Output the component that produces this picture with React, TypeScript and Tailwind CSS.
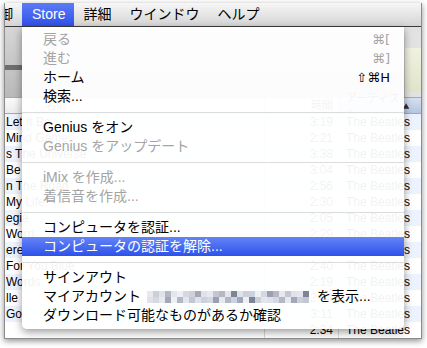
import React from "react";

const rows = [
  { name: "Let It Be", time: "3:19" },
  { name: "Mind Games", time: "2:21" },
  { name: "s The Universe", time: "3:38" },
  { name: "Be", time: "3:04" },
  { name: "n The Road", time: "2:56" },
  { name: "My Life", time: "2:30" },
  { name: "egia", time: "2:05" },
  { name: "Word", time: "2:29" },
  { name: "ere", time: "3:23" },
  { name: "For You Blue", time: "2:40" },
  { name: "Words", time: "2:19" },
  { name: "lle", time: "2:44" },
  { name: "Go", time: "3:11" },
  { name: "", time: "2:34" },
];

const palette = [
  "bg-[#e7e9ef]",
  "bg-[#cdd0d9]",
  "bg-[#b4b8c4]",
  "bg-[#dfe2ea]",
  "bg-[#eef0f4]",
  "bg-[#a3a8b6]",
  "bg-[#d5d8e0]",
  "bg-[#c3c7d2]",
  "bg-[#7f8494]",
  "bg-[#e3e6ed]",
  "bg-[#c9d3e3]",
  "bg-[#9aa0b0]",
];

const pattern = [
  0, 1, 3, 2, 9, 4, 6, 1, 5, 3, 0, 7, 2, 9, 8, 3, 1, 10, 4, 6, 11, 2, 0, 7, 3, 9, 8,
  3, 6, 0, 5, 4, 2, 9, 7, 3, 1, 6, 11, 0, 2, 10, 5, 4, 8, 1, 9, 3, 6, 2, 0, 5, 1, 7,
];

function Item({
  label,
  shortcut,
  disabled,
  active,
}: {
  label: React.ReactNode;
  shortcut?: React.ReactNode;
  disabled?: boolean;
  active?: boolean;
}) {
  const tone = active
    ? "bg-gradient-to-b from-[#6483f6] to-[#2e51ea] text-white"
    : disabled
    ? "text-[#a4a4a4]"
    : "text-black";
  return (
    <div
      className={`h-[19px] flex items-center justify-between pl-[21px] pr-[14px] leading-[19px] whitespace-nowrap ${tone}`}
    >
      <div className="flex items-center">{label}</div>
      {shortcut ? (
        <div className="font-['DejaVu_Sans',sans-serif] text-[13px]">{shortcut}</div>
      ) : null}
    </div>
  );
}

function Sep() {
  return (
    <div className="h-[12px] flex items-center">
      <div className="h-px w-full bg-[#dcdcdc]" />
    </div>
  );
}

function Mosaic() {
  return (
    <div className="grid grid-cols-[repeat(27,6px)] grid-rows-[repeat(2,6px)] ml-[6px]">
      {pattern.map((p, i) => (
        <div key={i} className={palette[p]} />
      ))}
    </div>
  );
}

export default function App() {
  return (
    <div className="w-[427px] h-[348px] bg-white overflow-hidden pl-[4px] pt-[3px] font-['Liberation_Sans','Noto_Sans_CJK_JP',sans-serif]">
      <div className="relative w-[418px] h-[336px] border-x border-b border-[#8c8c8c] bg-white shadow-[0_2px_6px_rgba(0,0,0,0.45)] overflow-hidden flex flex-col">
        {/* menu bar */}
        <div className="h-[24px] shrink-0 flex items-stretch border-b border-[#3a3a3a] bg-gradient-to-b from-[#f7f7f7] to-[#d4d4d4] text-[14px] text-black whitespace-nowrap">
          <div className="ml-[-29px] px-[9px] flex items-center">制御</div>
          <div className="pl-[10px] pr-[9px] flex items-center text-white bg-gradient-to-b from-[#5d7bf5] to-[#2f50ea]">
            Store
          </div>
          <div className="px-[9px] flex items-center">詳細</div>
          <div className="px-[9px] flex items-center">ウインドウ</div>
          <div className="px-[9px] flex items-center">ヘルプ</div>
        </div>

        {/* toolbar */}
        <div className="h-[70px] shrink-0 flex">
          <div className="w-[17px] flex flex-col bg-gradient-to-b from-[#d6d6d6] to-[#b9b9b9]">
            <div className="h-[38px]" />
            <div className="h-[5px] bg-[#6e6e6e]" />
          </div>
          <div className="flex-1 bg-gradient-to-b from-[#dedede] to-[#bdbdbd]" />
          <div className="w-[16px] flex flex-col bg-[#e2e2e2]">
            <div className="h-[21px]" />
            <div className="h-[44px] bg-gradient-to-b from-[#f1f2e2] to-[#e1e4c8]" />
          </div>
        </div>

        {/* header */}
        <div className="h-[17px] shrink-0 flex border-y border-[#a8a8a8] text-[11px] leading-[15px] text-[#222]">
          <div className="w-[260px] border-r border-[#c4c4c4] bg-gradient-to-b from-[#fbfbfb] to-[#ebebeb] pl-[40px]">
            名前
          </div>
          <div className="w-[74px] border-r border-[#c4c4c4] bg-gradient-to-b from-[#fbfbfb] to-[#ebebeb] text-right pr-[5px]">
            時間
          </div>
          <div className="flex-1 flex justify-between items-center bg-gradient-to-b from-[#d6e0f1] to-[#b4c6e2] pl-[7px] pr-[12px]">
            <span>アーティスト</span>
            <svg width="7" height="6" viewBox="0 0 7 6">
              <path d="M3.5 0 L7 6 L0 6 Z" fill="#2d2d2d" />
            </svg>
          </div>
        </div>

        {/* rows */}
        <div className="flex-1 flex flex-col">
          {rows.map((r, i) => (
            <div
              key={i}
              className={`h-[16px] shrink-0 flex text-[12px] leading-[16px] text-black ${
                i % 2 === 0 ? "bg-[#edf3fe]" : "bg-white"
              }`}
            >
              <div className="w-[260px] border-r border-[#d9d9d9] pl-[1px] whitespace-nowrap overflow-hidden">
                {r.name}
              </div>
              <div className="w-[74px] border-r border-[#d9d9d9] text-right pr-[5px]">{r.time}</div>
              <div className="flex-1 pl-[7px] whitespace-nowrap">The Beatles</div>
            </div>
          ))}
        </div>

        {/* dropdown menu */}
        <div className="absolute left-[17px] top-[24px] w-[382px] pt-[3px] pb-[4px] bg-white/95 rounded-b-[5px] shadow-[0_3px_9px_rgba(0,0,0,0.4)] text-[14px]">
          <Item label="戻る" shortcut="⌘[" disabled />
          <Item label="進む" shortcut="⌘]" disabled />
          <Item label="ホーム" shortcut="⇧⌘H" />
          <Item label="検索..." />
          <Sep />
          <Item label="Genius をオン" />
          <Item label="Genius をアップデート" disabled />
          <Sep />
          <Item label="iMix を作成..." disabled />
          <Item label="着信音を作成..." disabled />
          <Sep />
          <Item label="コンピュータを認証..." />
          <Item label="コンピュータの認証を解除..." active />
          <Sep />
          <Item label="サインアウト" />
          <Item
            label={
              <>
                <span>マイアカウント</span>
                <Mosaic />
                <span className="ml-[8px]">を表示...</span>
              </>
            }
          />
          <Item label="ダウンロード可能なものがあるか確認" />
        </div>
      </div>
    </div>
  );
}
